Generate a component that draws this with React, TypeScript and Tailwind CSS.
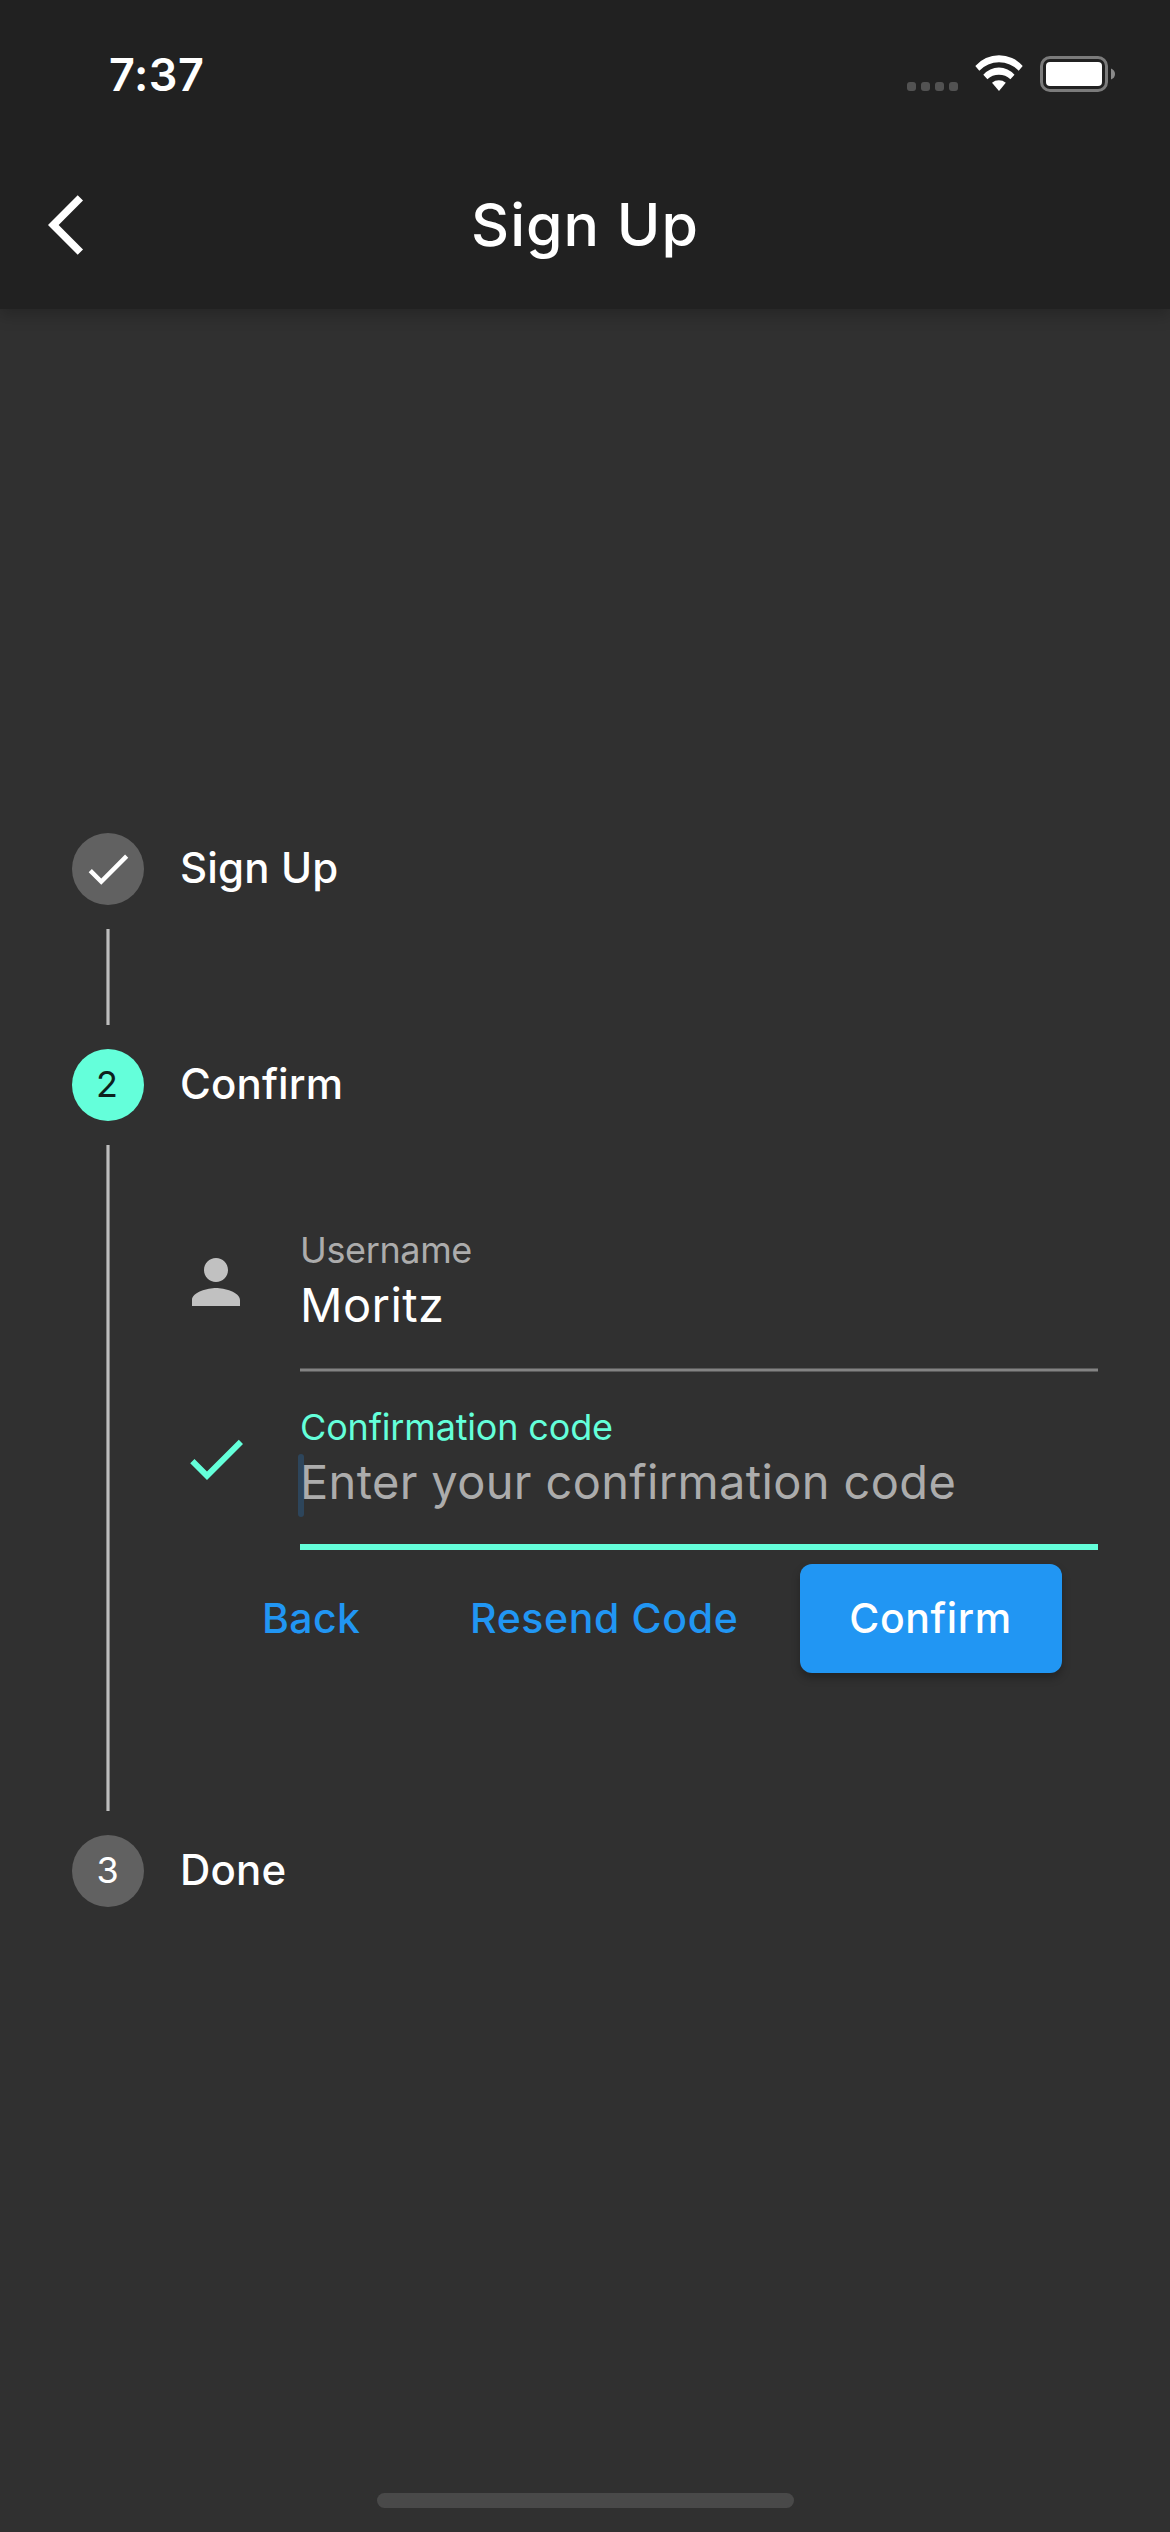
import type { ReactNode } from "react";

function StatusBar() {
  return (
    <div className="flex h-[141px] items-start justify-between pl-[109px] pr-[55px]">
      <time className="pt-[45px] text-[45px] font-semibold leading-[60px] tracking-[0.54px]">7:37</time>
      <div className="flex pt-[55px]">
        <div className="mt-[27px] flex gap-[5px]">
          {[0, 1, 2, 3].map((dot) => (
            <span key={dot} className="size-[9px] rounded-[3px] bg-[#525252]" />
          ))}
        </div>
        <svg className="ml-[17px] h-[36px] w-[48px]" viewBox="0 0 48 36" fill="#fff">
          <path d="M.3 11A31.6 31.6 0 0 1 47.7 11L43.7 15.7A27.3 27.3 0 0 0 4.3 15.7Z" />
          <path d="M8.3 19.7A20.7 20.7 0 0 1 39.5 19.7L35.4 24.3A17 17 0 0 0 12.4 24.3Z" />
          <path d="M17 27.7A11 11 0 0 1 30.8 27.7L24 36Z" />
        </svg>
        <svg className="ml-[17px] mt-px h-[36px] w-[75px]" viewBox="0 0 75 36">
          <rect x="1.5" y="1.5" width="65" height="33" rx="8.5" fill="none" stroke="#7b7b7b" strokeWidth="3" />
          <rect x="6" y="6" width="56" height="24" rx="4" fill="#fff" />
          <path d="M71 12.5Q75 14 75 18T71 23.5Z" fill="#8a8a8a" />
        </svg>
      </div>
    </div>
  );
}

function AppBar() {
  return (
    <div className="grid h-[168px] grid-cols-[168px_1fr_168px] items-center">
      <button type="button" aria-label="Go back" className="pl-[48px]">
        <svg className="size-[72px]" viewBox="0 0 24 24" fill="#fff">
          <path d="M11.67 3.87L9.9 2.1 0 12l9.9 9.9 1.77-1.77L3.54 12z" />
        </svg>
      </button>
      <h1 className="text-center text-[59px] font-medium leading-[72px] tracking-[1px]">Sign Up</h1>
    </div>
  );
}

function CheckIcon({ className }: { className: string }) {
  return (
    <svg className={className} viewBox="0 0 24 24" fill="currentColor">
      <path d="M9 16.17L4.83 12l-1.42 1.41L9 19 21 7l-1.41-1.41z" />
    </svg>
  );
}

function StepHeader({ badge, title, active = false }: { badge: ReactNode; title: string; active?: boolean }) {
  return (
    <div className="flex h-[72px] items-center gap-[36px]">
      <span
        className={
          active
            ? "flex size-[72px] items-center justify-center rounded-full bg-[#64ffda] text-[36px] leading-none text-[#0d211c]"
            : "flex size-[72px] items-center justify-center rounded-full bg-[#616161] text-[36px] leading-none text-white"
        }
      >
        {badge}
      </span>
      <span className="pb-[3px] text-[42px] font-medium leading-[60px] tracking-[0.15px]">{title}</span>
    </div>
  );
}

function Connector() {
  return (
    <div className="flex w-[72px] shrink-0 justify-center py-[24px]">
      <div className="w-[4px] border-x border-[#838383] bg-[#bdbdbd]" />
    </div>
  );
}

export default function App() {
  return (
    <div className="flex h-[2532px] w-[1170px] flex-col overflow-hidden bg-[#303030] font-[Inter,sans-serif] text-white">
      <header className="h-[309px] bg-[#212121] shadow-[0_6px_15px_rgba(0,0,0,0.22)]">
        <StatusBar />
        <AppBar />
      </header>

      <main className="flex-1 px-[72px] pt-[524px]">
        <StepHeader badge={<CheckIcon className="size-[54px]" />} title="Sign Up" />
        <div className="flex h-[144px]">
          <Connector />
        </div>

        <StepHeader badge={<span className="pb-[2px] pr-[2px]">2</span>} title="Confirm" active />
        <div className="flex h-[714px]">
          <Connector />
          <div className="ml-[36px] w-[918px] pt-[108px]">
            <div className="flex h-[177px]">
              <svg className="mr-[48px] mt-[17px] size-[72px] shrink-0" viewBox="0 0 24 24" fill="#c1c1c1">
                <path d="M12 12c2.21 0 4-1.79 4-4s-1.79-4-4-4-4 1.79-4 4 1.79 4 4 4zm0 2c-2.67 0-8 1.34-8 4v2h16v-2c0-2.66-5.33-4-8-4z" />
              </svg>
              <div className="flex-1">
                <div className="h-[42px] text-[36px] leading-[42px] tracking-[-0.37px] text-[#acacac]">Username</div>
                <div className="mt-[5px] h-[58px] text-[47px] leading-[58px] tracking-[0.44px]">Moritz</div>
                <div className="mt-[34px] h-[4px] border-y border-[#5a5a5a] bg-[#838383]" />
              </div>
            </div>

            <div className="flex h-[144px]">
              <CheckIcon className="mr-[48px] mt-[17px] size-[72px] shrink-0 text-[#64ffda]" />
              <div className="flex-1">
                <div className="h-[42px] text-[36px] leading-[42px] tracking-[-0.17px] text-[#64ffda]">Confirmation code</div>
                <div className="relative mt-[5px] h-[58px] text-[47px] leading-[58px] tracking-[0.35px] text-[#acacac]">
                  <span className="absolute -left-[2px] top-px h-[63px] w-[6px] rounded-full bg-[#2d455b]" />
                  <span className="relative">Enter your confirmation code</span>
                </div>
                <div className="mt-[33px] h-[6px] bg-[#64ffda]" />
              </div>
            </div>

            <div className="mt-[14px] flex h-[109px] items-center pl-[82px] text-[41px] font-medium leading-[60px]">
              <button type="button" className="w-[208px] pb-[2px] text-left tracking-[0.38px] text-[#2196f3]">Back</button>
              <button type="button" className="w-[330px] pb-[2px] text-left tracking-[0.63px] text-[#2196f3]">Resend Code</button>
              <button
                type="button"
                className="h-[109px] w-[262px] rounded-[12px] bg-[#2196f3] pb-[2px] pr-px text-center tracking-[0.6px] shadow-[0_5px_8px_rgba(0,0,0,0.28)]"
              >
                Confirm
              </button>
            </div>
          </div>
        </div>

        <StepHeader badge={<span className="pb-[3px] pr-px">3</span>} title="Done" />
      </main>

      <footer className="flex h-[39px] justify-center">
        <div className="h-[15px] w-[417px] rounded-full bg-[#494949]" />
      </footer>
    </div>
  );
}
